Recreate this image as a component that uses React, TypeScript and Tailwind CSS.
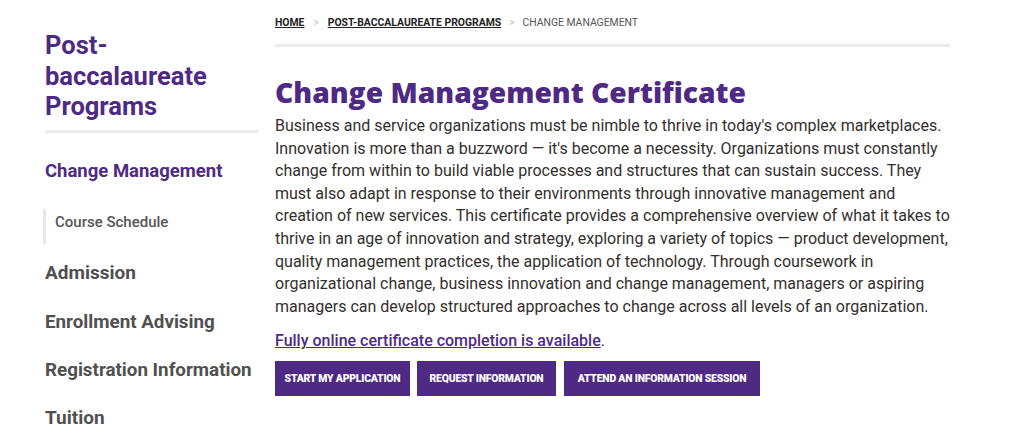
import React from "react";

const body = { fontFamily: "Roboto, 'Liberation Sans', sans-serif" };
const head = { fontFamily: "'Open Sans', 'Liberation Sans', sans-serif" };

export default function App() {
  return (
    <div className="w-[1024px] h-[433px] overflow-hidden bg-white flex pl-[45px]" style={body}>
      <aside className="w-[213px] shrink-0 pt-[30px]">
        <h2 className="text-[25.5px] leading-[30.5px] font-bold text-[#4e2a84] pb-[8px] border-b-[3px] border-[#ebebeb]">
          Post-
          <br />
          baccalaureate
          <br />
          Programs
        </h2>
        <nav className="flex flex-col">
          <a className="mt-[26px] text-[18.5px] leading-[24px] font-bold text-[#4e2a84]">Change Management</a>
          <div className="mt-[26px] ml-[-2px] border-l-[3px] border-[#e8e8e8] pl-[9px] h-[35px] pt-[1px]">
            <a className="text-[15px] leading-[16px] font-medium text-[#555]">Course Schedule</a>
          </div>
          <a className="mt-[17px] text-[19px] leading-[24px] font-bold text-[#505050]">Admission</a>
          <a className="mt-[25px] text-[18.8px] leading-[24px] font-bold text-[#505050]">Enrollment Advising</a>
          <a className="mt-[24px] text-[18.8px] leading-[24px] font-bold text-[#505050]">Registration Information</a>
          <a className="mt-[24px] text-[19px] leading-[24px] font-bold text-[#505050]">Tuition</a>
        </nav>
      </aside>
      <main className="ml-[17px] w-[675px] shrink-0">
        <div className="pt-[16px] pb-[14px] border-b-[3px] border-[#ebebeb] flex items-center text-[10.4px] leading-[14px] uppercase">
          <a className="font-bold text-[#222] underline">Home</a>
          <span className="mx-[9px] text-[#bbb] text-[10px]">&gt;</span>
          <a className="font-bold text-[#222] underline">Post-Baccalaureate Programs</a>
          <span className="mx-[8px] text-[#bbb] text-[10px]">&gt;</span>
          <span className="text-[#555]">Change Management</span>
        </div>
        <h1 className="mt-[27px] text-[28.2px] leading-[36px] font-extrabold text-[#4e2a84]" style={head}>
          Change Management Certificate
        </h1>
        <p className="mt-[5px] text-[16px] leading-[22.6px] text-[#342f2e]">
          Business and service organizations must be nimble to thrive in today's complex marketplaces. Innovation is more than a buzzword — it's become a necessity. Organizations must constantly change from within to build viable processes and structures that can sustain success. They must also adapt in response to their environments through innovative management and creation of new services. This certificate provides a comprehensive overview of what it takes to thrive in an age of innovation and strategy, exploring a variety of topics — product development, quality management practices, the application of technology. Through coursework in organizational change, business innovation and change management, managers or aspiring managers can develop structured approaches to change across all levels of an organization.
        </p>
        <p className="mt-[12px] text-[16px] leading-[22px] text-[#342f2e]">
          <a className="font-medium text-[#4e2a84] underline">Fully online certificate completion is available</a>.
        </p>
        <div className="mt-[9px] flex">
          <a className="h-[35px] w-[135px] flex items-center justify-center bg-[#4e2a84] text-white text-[10.4px] font-black uppercase tracking-[-0.2px]">Start My Application</a>
          <a className="ml-[7px] h-[35px] w-[139px] flex items-center justify-center bg-[#4e2a84] text-white text-[10.4px] font-black uppercase tracking-[-0.2px]">Request Information</a>
          <a className="ml-[8px] h-[35px] w-[196px] flex items-center justify-center bg-[#4e2a84] text-white text-[10.4px] font-black uppercase tracking-[-0.2px]">Attend an Information Session</a>
        </div>
      </main>
    </div>
  );
}
